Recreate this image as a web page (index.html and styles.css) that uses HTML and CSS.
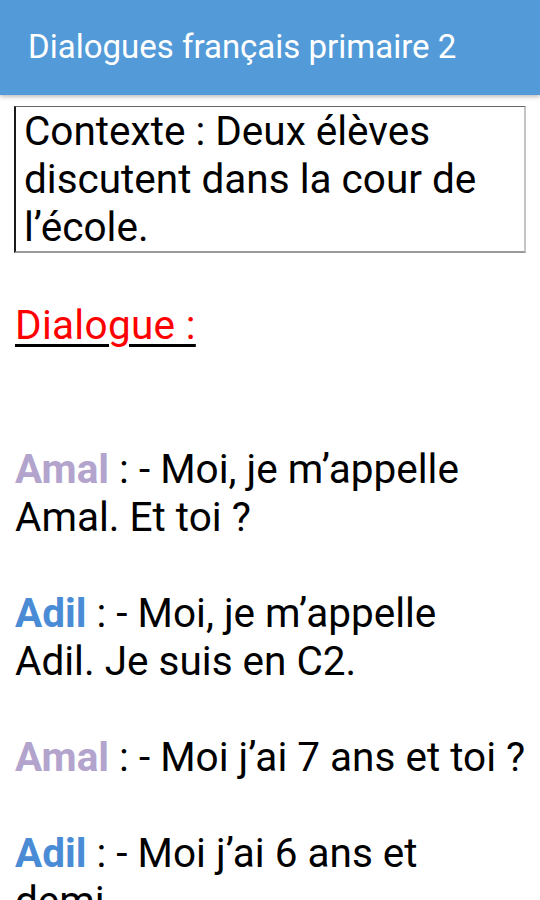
FILE: index.html
```html
<!DOCTYPE html>
<html lang="fr">
<head>
<meta charset="utf-8">
<title>Dialogues français primaire 2</title>
<link rel="stylesheet" href="styles.css">
</head>
<body>
<header class="appbar">
  <h1 class="title">Dialogues français primaire 2</h1>
</header>
<main class="content">
  <div class="context">Contexte : Deux élèves discutent dans la cour de l’école.</div>
  <p class="blank">&nbsp;</p>
  <p class="heading"><u><span class="red">Dialogue :</span></u></p>
  <p class="blank">&nbsp;</p>
  <p class="blank">&nbsp;</p>
  <p class="line"><b class="amal">Amal</b> : - Moi, je m’appelle Amal. Et toi ?</p>
  <p class="blank">&nbsp;</p>
  <p class="line"><b class="adil">Adil</b> : - Moi, je m’appelle Adil. Je suis en C2.</p>
  <p class="blank">&nbsp;</p>
  <p class="line"><b class="amal">Amal</b> : - Moi j’ai 7 ans et toi ?</p>
  <p class="blank">&nbsp;</p>
  <p class="line"><b class="adil">Adil</b> : - Moi j’ai 6 ans et<br>demi</p>
</main>
</body>
</html>
```
FILE: styles.css
```css
html, body {
  margin: 0;
  padding: 0;
  background: #ffffff;
}
body {
  font-family: Roboto, "Noto Sans", sans-serif;
  color: #000;
  width: 540px;
  height: 900px;
  overflow: hidden;
}
.appbar {
  height: 95px;
  background: #539bd8;
  display: flex;
  align-items: center;
  padding-left: 28px;
  box-shadow: 0 2px 4px rgba(0,0,0,0.25);
  position: relative;
}
.title {
  margin: 0;
  font-weight: 400;
  font-size: 33px;
  color: #ffffff;
  padding-bottom: 2px;
}
.content {
  padding: 11px 14px 0 14px;
  font-size: 40.5px;
  line-height: 48px;
}
.context {
  border-left: 2px solid #1a1a1a;
  border-top: 1px solid #666;
  border-right: 2px solid #c4c4c4;
  border-bottom: 2px solid #9a9a9a;
  padding: 0 8px 0 8px;
}
.content p {
  margin: 0;
  padding-left: 1px;
}
.red { color: #f00; }
.heading u { text-decoration-color: #000; text-decoration-thickness: 3px; text-underline-offset: 5px; letter-spacing: 0.3px; }
.amal { color: #b2a4cd; }
.adil { color: #4a8bd6; }
```
